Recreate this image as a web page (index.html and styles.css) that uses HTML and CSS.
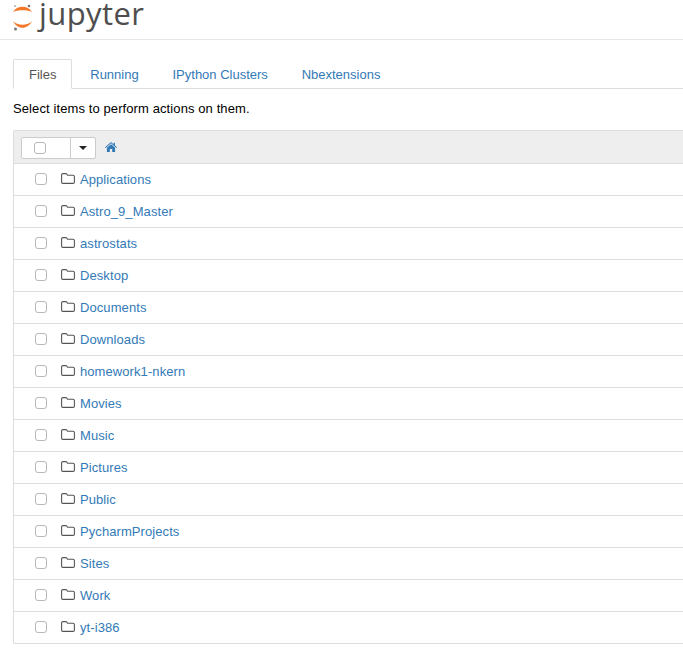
FILE: index.html
```html
<!DOCTYPE html>
<html lang="en">
<head>
    <meta charset="UTF-8">
    <title>Home</title>
    <link rel="stylesheet" href="styles.css">
</head>
<body>
    <svg width="0" height="0" class="defs">
        <symbol id="folder" viewBox="0 0 14 11">
            <path d="M.6 9.200V1.800C.6 1.100 1.100 .6 1.800 .6H4.800C5.300 .6 5.600 .8 5.900 1.200L6.600 2.200H12.100C12.800 2.200 13.400 2.800 13.400 3.500V9.200C13.400 9.900 12.800 10.400 12.100 10.400H1.800C1.100 10.400 .6 9.900 .6 9.200Z" fill="none" stroke="#555" stroke-width="1.100"/>
        </symbol>
    </svg>

    <header class="site-header">
        <svg class="logo-mark" width="22" height="30" viewBox="0 0 22 30">
            <path d="M1 11C5 4 16 4 20 11C16 8.500 5 8.500 1 11Z" fill="#f37726"/>
            <path d="M1 20C5 29 16 29 20 20C16 25 5 25 1 20Z" fill="#f37726"/>
            <circle cx="17" cy="5" r="1.300" fill="#767677"/>
            <circle cx="3" cy="5" r="0.800" fill="#767677"/>
            <circle cx="3.500" cy="28" r="1.500" fill="#767677"/>
        </svg>
        <span class="logo-text">jupyter</span>
    </header>

    <main class="page">
        <ul class="tabs">
            <li class="tab active">Files</li>
            <li class="tab">Running</li>
            <li class="tab">IPython Clusters</li>
            <li class="tab">Nbextensions</li>
        </ul>

        <p class="hint">Select items to perform actions on them.</p>

        <section class="file-list">
            <div class="toolbar">
                <div class="select-btn">
                    <span class="select-box"><span class="check"></span></span>
                    <span class="select-caret"><span class="caret"></span></span>
                </div>
                <svg class="home-icon" width="12" height="10" viewBox="0 0 13 11">
                    <path d="M6.500 0L9.200 2.400V.8H10.800V3.800L13 5.800L12.300 6.500L6.500 1.500L.7 6.500L0 5.800Z" fill="#337ab7"/>
                    <path d="M2 6.300L6.500 2.500L11 6.300V11H7.800V7.800H5.200V11H2Z" fill="#337ab7"/>
                </svg>
            </div>
            <div class="row"><span class="check"></span><svg class="folder"><use href="#folder"/></svg><a class="name">Applications</a></div>
            <div class="row"><span class="check"></span><svg class="folder"><use href="#folder"/></svg><a class="name">Astro_9_Master</a></div>
            <div class="row"><span class="check"></span><svg class="folder"><use href="#folder"/></svg><a class="name">astrostats</a></div>
            <div class="row"><span class="check"></span><svg class="folder"><use href="#folder"/></svg><a class="name">Desktop</a></div>
            <div class="row"><span class="check"></span><svg class="folder"><use href="#folder"/></svg><a class="name">Documents</a></div>
            <div class="row"><span class="check"></span><svg class="folder"><use href="#folder"/></svg><a class="name">Downloads</a></div>
            <div class="row"><span class="check"></span><svg class="folder"><use href="#folder"/></svg><a class="name">homework1-nkern</a></div>
            <div class="row"><span class="check"></span><svg class="folder"><use href="#folder"/></svg><a class="name">Movies</a></div>
            <div class="row"><span class="check"></span><svg class="folder"><use href="#folder"/></svg><a class="name">Music</a></div>
            <div class="row"><span class="check"></span><svg class="folder"><use href="#folder"/></svg><a class="name">Pictures</a></div>
            <div class="row"><span class="check"></span><svg class="folder"><use href="#folder"/></svg><a class="name">Public</a></div>
            <div class="row"><span class="check"></span><svg class="folder"><use href="#folder"/></svg><a class="name">PycharmProjects</a></div>
            <div class="row"><span class="check"></span><svg class="folder"><use href="#folder"/></svg><a class="name">Sites</a></div>
            <div class="row"><span class="check"></span><svg class="folder"><use href="#folder"/></svg><a class="name">Work</a></div>
            <div class="row"><span class="check"></span><svg class="folder"><use href="#folder"/></svg><a class="name">yt-i386</a></div>
        </section>
    </main>
</body>
</html>
```

FILE: styles.css
```css
html, body {
    margin: 0;
    padding: 0;
    height: 664px;
    overflow: hidden;
}
body {
    font-family: 'Liberation Sans', Arial, sans-serif;
    font-size: 13px;
    line-height: 18px;
    color: #000000;
    background-color: #ffffff;
}
.defs {
    display: block;
    height: 0;
}
.site-header {
    height: 39px;
    border-bottom: 1px solid #e7e7e7;
    display: flex;
    align-items: flex-start;
    padding-left: 12px;
}
.logo-mark {
    margin-top: 1px;
}
.logo-text {
    font-family: 'Open Sans', sans-serif;
    font-size: 31px;
    line-height: 26px;
    letter-spacing: 0.4px;
    color: #4e4e4e;
    margin-left: 5px;
}
.page {
    padding-left: 13px;
}
.tabs {
    list-style: none;
    margin: 19px 0 0;
    padding: 0;
    height: 29px;
    display: flex;
    border-bottom: 1px solid #dddddd;
}
.tab {
    height: 30px;
    box-sizing: border-box;
    padding: 6px 15px;
    margin-right: 1.800px;
    border: 1px solid transparent;
    color: #337ab7;
}
.tab.active {
    color: #555555;
    background-color: #ffffff;
    border-color: #dddddd;
    border-bottom-color: #ffffff;
    border-radius: 2px 2px 0 0;
}
.hint {
    margin: 11px 0 0;
    height: 30px;
    letter-spacing: 0.1px;
}
.file-list {
    border: 1px solid #dddddd;
    border-right: none;
    border-radius: 2px 0 0 2px;
}
.toolbar {
    height: 32px;
    box-sizing: border-box;
    background-color: #eeeeee;
    display: flex;
    align-items: flex-start;
    padding: 6px 0 0 7px;
}
.select-btn {
    display: flex;
    height: 20px;
    background-color: #ffffff;
    border: 1px solid #cccccc;
    border-radius: 2px;
}
.select-box {
    width: 49px;
    display: flex;
    align-items: center;
    padding-left: 12px;
    box-sizing: border-box;
    border-right: 1px solid #cccccc;
}
.select-caret {
    width: 24px;
    display: flex;
    align-items: center;
    justify-content: center;
}
.caret {
    width: 0;
    height: 0;
    border-top: 4px solid #222222;
    border-left: 4px solid transparent;
    border-right: 4px solid transparent;
}
.home-icon {
    margin-left: 9px;
    margin-top: 5px;
}
.row {
    height: 32px;
    box-sizing: border-box;
    border-top: 1px solid #dddddd;
    display: flex;
    align-items: center;
    padding-left: 21px;
}
.check {
    display: block;
    width: 10px;
    height: 10px;
    background-color: #ffffff;
    border: 1px solid #b8b8b8;
    border-radius: 3px;
}
.row .check {
    margin-top: -2px;
}
.folder {
    width: 14px;
    height: 11px;
    margin-left: 14px;
    margin-top: -2px;
}
.name {
    color: #337ab7;
    margin-left: 5px;
    letter-spacing: 0.08px;
}
```
